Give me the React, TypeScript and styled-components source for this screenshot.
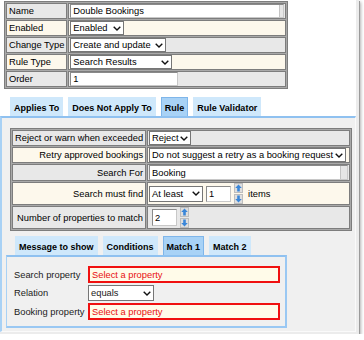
import React from 'react';
import styled, { createGlobalStyle } from 'styled-components';

const Global = createGlobalStyle`
  *, *::before, *::after { box-sizing: border-box; }
  html, body { margin: 0; padding: 0; background: #fff; }
  body { font-family: "Liberation Sans", Arial, sans-serif; font-size: 7pt; color: #000; }
`;

const Window = styled.div`
  width: 359px;
  height: 334px;
  background: #fff;
  border-right: 3px solid #ececec;
  border-bottom: 2px solid #ececec;
  box-shadow: 1px 1px 0 #9a9a9a, 2px 2px 3px rgba(0, 0, 0, 0.3);
  display: flex;
  flex-direction: column;
  align-items: flex-start;
  padding-top: 1px;
`;

const GridTable = styled.table<{ $ml: number }>`
  margin-left: ${p => p.$ml}px;
  border-collapse: separate;
  border-spacing: 1px;
  border: 1px solid #7d7d7d;
  background: #a9a9a9;
`;

const Row = styled.tr<{ $alt: boolean; $h?: number }>`
  background: ${p => (p.$alt ? '#fdf8ec' : '#e8e8e8')};
  & > td { height: ${p => p.$h ?? 16}px; }
`;

const LabelCell = styled.td<{ $right?: boolean }>`
  border: 1px solid #7d7d7d;
  padding: 0 2px;
  text-align: ${p => (p.$right ? 'right' : 'left')};
  white-space: nowrap;
  vertical-align: middle;
`;

const ValueCell = styled.td`
  border: 1px solid #7d7d7d;
  padding: 0 1px;
  vertical-align: middle;
`;

const Inline = styled.div<{ $pl?: number }>`
  display: flex;
  align-items: center;
  gap: 3px;
  padding-left: ${p => p.$pl ?? 0}px;
`;

const SelectBox = styled.div<{ $w: number; $h?: number }>`
  width: ${p => p.$w}px;
  height: ${p => p.$h ?? 14}px;
  border: 1px solid #767676;
  background: #fff;
  display: flex;
  align-items: center;
  justify-content: space-between;
  padding: 0 2px 0 2px;
  white-space: nowrap;
  overflow: hidden;
`;

const TextBox = styled.div<{ $w: number; $h?: number }>`
  width: ${p => p.$w}px;
  height: ${p => p.$h ?? 14}px;
  border: 1px solid #8a8a8a;
  border-right-color: #c8c8c8;
  border-bottom-color: #c8c8c8;
  background: #fff;
  display: flex;
  align-items: center;
  padding-left: 2px;
  white-space: nowrap;
  position: relative;
  overflow: hidden;
`;

const ScrollStrip = styled.div<{ $w: number }>`
  position: absolute;
  right: 0;
  top: 0;
  bottom: 0;
  width: ${p => p.$w}px;
  background: #e6e6e6;
  border-left: 1px solid #c4c4c4;
`;

const ErrorBox = styled.div`
  width: 192px;
  height: 17px;
  border: 2px solid #f01010;
  background: #fffbe9;
  color: #e81010;
  display: flex;
  align-items: center;
  padding-left: 2px;
  white-space: nowrap;
`;

const TabRow = styled.div<{ $pl: number; $mt: number }>`
  display: flex;
  align-items: flex-end;
  gap: 5px;
  padding-left: ${p => p.$pl}px;
  margin-top: ${p => p.$mt}px;
  height: 19px;
`;

const Tab = styled.div<{ $active?: boolean }>`
  height: 19px;
  padding: 2px 3px 0 3px;
  display: flex;
  align-items: center;
  font-weight: bold;
  font-size: 9px;
  white-space: nowrap;
  background: ${p => (p.$active ? '#a8d2f6' : '#cfe8fb')};
  border: 1px solid ${p => (p.$active ? '#7fb6ea' : '#cfe8fb')};
  border-bottom: none;
`;

const Panel = styled.div`
  flex: 1;
  align-self: stretch;
  background: #f0f0f0;
  border-top: 2px solid #8fc1f0;
  border-left: 2px solid #a8d1f5;
  border-right: 1px solid #fafafa;
  border-bottom: 1px solid #fafafa;
  padding: 10px 0 0 4px;
  display: flex;
  flex-direction: column;
  align-items: flex-start;
`;

const SubSection = styled.div`
  margin-top: 5px;
  display: flex;
  flex-direction: column;
`;

const SubPanel = styled.div`
  width: 281px;
  height: 73px;
  border-top: 2px solid #8fc1f0;
  border-left: 1px solid #a8d1f5;
  border-right: 2px solid #9ac8f3;
  border-bottom: 2px solid #9ac8f3;
  padding: 9px 0 0 7px;
  display: grid;
  grid-template-columns: 74px auto;
  grid-template-rows: 17px 16px 17px;
  row-gap: 2px;
  align-items: center;
  justify-items: start;
  color: #222;
`;

const Spinner = styled.div`
  display: flex;
  flex-direction: column;
  gap: 1px;
`;

const SpinButton = styled.div`
  width: 9px;
  height: 10px;
  background: #dedede;
  border: 1px solid #bdbdbd;
  display: flex;
  align-items: center;
  justify-content: center;
`;

const Items = styled.span`
  margin-left: 2px;
`;

const Chevron = () => (
  <svg width="8" height="5" viewBox="0 0 8 5">
    <path d="M0.7 0.7 L4 4 L7.3 0.7" fill="none" stroke="#111" strokeWidth="1.4" />
  </svg>
);

const Arrow = ({ down }: { down?: boolean }) => (
  <svg width="7" height="8" viewBox="0 0 7 8" style={down ? { transform: 'rotate(180deg)' } : undefined}>
    <path d="M3.5 0.5 L6.8 4 L4.8 4 L4.8 7.5 L2.2 7.5 L2.2 4 L0.2 4 Z" fill="#3a86d8" />
  </svg>
);

const Select = ({ w, h, children }: { w: number; h?: number; children: React.ReactNode }) => (
  <SelectBox $w={w} $h={h}>
    <span>{children}</span>
    <Chevron />
  </SelectBox>
);

const Spin = () => (
  <Spinner>
    <SpinButton><Arrow /></SpinButton>
    <SpinButton><Arrow down /></SpinButton>
  </Spinner>
);

export default function App() {
  return (
    <>
      <Global />
      <Window>
        <GridTable $ml={4}>
          <tbody>
            <Row $alt={false}>
              <LabelCell>Name</LabelCell>
              <ValueCell>
                <TextBox $w={214}>Double Bookings<ScrollStrip $w={4} /></TextBox>
              </ValueCell>
            </Row>
            <Row $alt>
              <LabelCell>Enabled</LabelCell>
              <ValueCell><Select w={54}>Enabled</Select></ValueCell>
            </Row>
            <Row $alt={false}>
              <LabelCell>Change Type</LabelCell>
              <ValueCell><Select w={96}>Create and update</Select></ValueCell>
            </Row>
            <Row $alt>
              <LabelCell>Rule Type</LabelCell>
              <ValueCell><Select w={102}>Search Results</Select></ValueCell>
            </Row>
            <Row $alt={false}>
              <LabelCell>Order</LabelCell>
              <ValueCell><TextBox $w={108}>1</TextBox></ValueCell>
            </Row>
          </tbody>
        </GridTable>

        <TabRow $pl={10} $mt={8}>
          <Tab>Applies To</Tab>
          <Tab>Does Not Apply To</Tab>
          <Tab $active>Rule</Tab>
          <Tab>Rule Validator</Tab>
        </TabRow>

        <Panel>
          <GridTable $ml={4}>
            <tbody>
              <Row $alt={false}>
                <LabelCell $right>Reject or warn when exceeded</LabelCell>
                <ValueCell><Select w={42}>Reject</Select></ValueCell>
              </Row>
              <Row $alt>
                <LabelCell $right>Retry approved bookings</LabelCell>
                <ValueCell><Select w={197}>Do not suggest a retry as a booking request</Select></ValueCell>
              </Row>
              <Row $alt={false}>
                <LabelCell $right>Search For</LabelCell>
                <ValueCell>
                  <TextBox $w={199} $h={15}>Booking<ScrollStrip $w={7} /></TextBox>
                </ValueCell>
              </Row>
              <Row $alt $h={23}>
                <LabelCell $right>Search must find</LabelCell>
                <ValueCell>
                  <Inline>
                    <Select w={54} h={16}>At least</Select>
                    <TextBox $w={25} $h={16}>1</TextBox>
                    <Spin />
                    <Items>items</Items>
                  </Inline>
                </ValueCell>
              </Row>
              <Row $alt={false} $h={23}>
                <LabelCell $right>Number of properties to match</LabelCell>
                <ValueCell>
                  <Inline $pl={3}>
                    <TextBox $w={25} $h={17}>2</TextBox>
                    <Spin />
                  </Inline>
                </ValueCell>
              </Row>
            </tbody>
          </GridTable>

          <SubSection>
            <TabRow $pl={9} $mt={0}>
              <Tab>Message to show</Tab>
              <Tab>Conditions</Tab>
              <Tab $active>Match 1</Tab>
              <Tab>Match 2</Tab>
            </TabRow>
            <SubPanel>
              <span>Search property</span>
              <ErrorBox>Select a property</ErrorBox>
              <span>Relation</span>
              <Select w={66} h={16}>equals</Select>
              <span>Booking property</span>
              <ErrorBox>Select a property</ErrorBox>
            </SubPanel>
          </SubSection>
        </Panel>
      </Window>
    </>
  );
}
